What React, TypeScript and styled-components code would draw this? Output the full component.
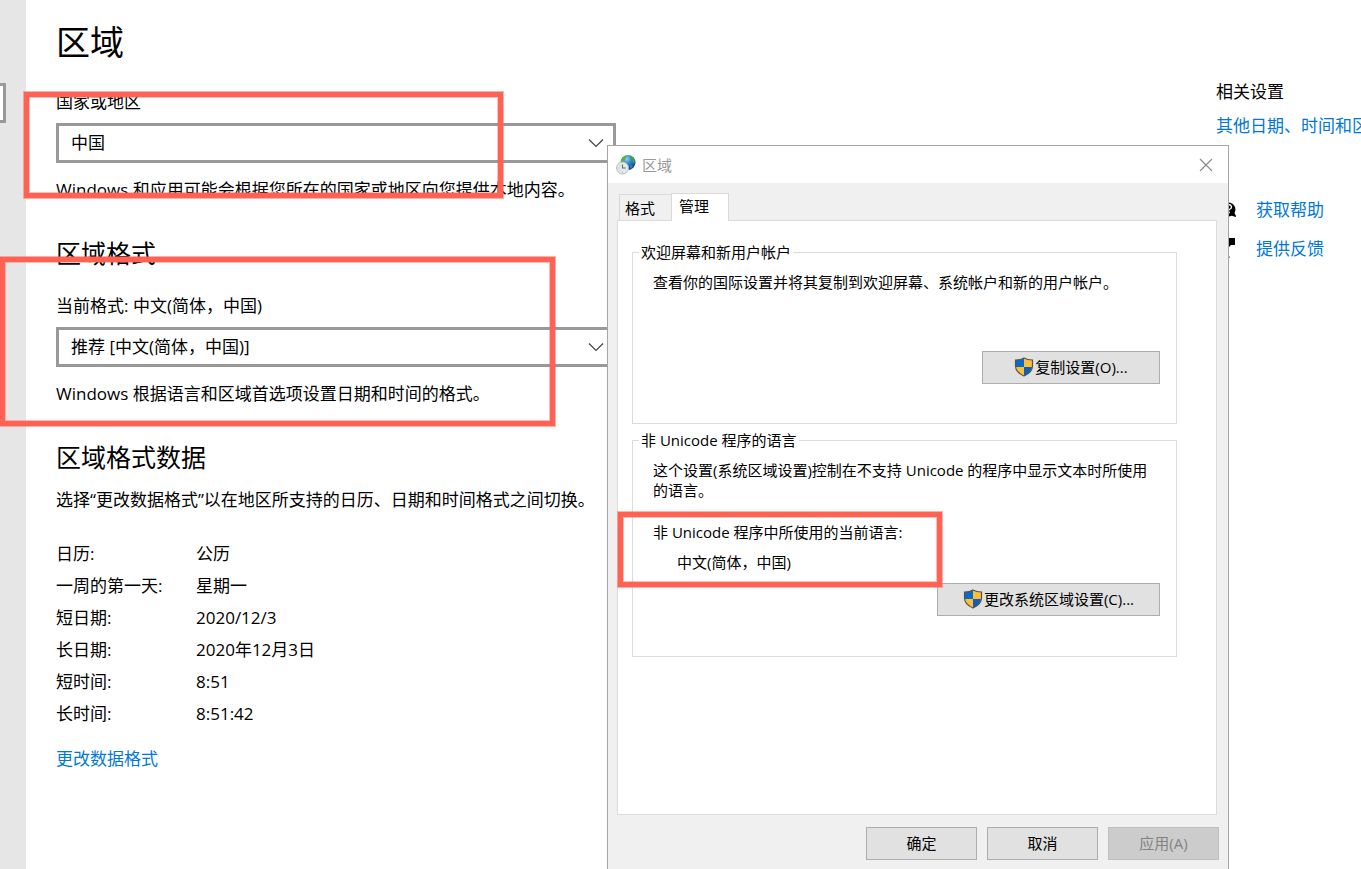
import React from "react";
import styled, { createGlobalStyle } from "styled-components";

const GlobalStyle = createGlobalStyle`
  *, *::before, *::after { box-sizing: border-box; }
  body {
    margin: 0;
    background: #fff;
    color: #000;
    font-family: "Open Sans", "Noto Sans CJK SC", sans-serif;
    font-size: 17px;
    line-height: 24px;
  }
  h1, h2, p, dl, dd, dt { margin: 0; font-weight: 400; }
`;

const Page = styled.div`
  position: relative;
  display: flex;
  height: 100vh;
  overflow: hidden;
`;

const Sidebar = styled.nav`
  flex: none;
  display: flex;
  justify-content: flex-end;
  align-items: flex-start;
  width: 26px;
  padding: 83px 20px 0 0;
  overflow: hidden;
  background: #e6e6e6;
`;

const SearchBox = styled.input`
  flex: none;
  width: 280px;
  height: 40px;
  border: 3px solid #999;
  background: #fff;
`;

const Main = styled.main`
  flex: 1;
  min-width: 0;
  padding: 18px 30px 0;
`;

const Title = styled.h1`
  font-size: 34px;
  line-height: 48px;
`;

const Section = styled.section<{ $gap: number }>`
  display: flex;
  flex-direction: column;
  align-items: flex-start;
  margin-top: ${(p) => p.$gap}px;
`;

const Heading = styled.h2`
  font-size: 25px;
  line-height: 36px;
`;

const Label = styled.label<{ $gap?: number }>`
  margin-top: ${(p) => p.$gap ?? 0}px;
`;

const SelectFrame = styled.div`
  position: relative;
  width: 560px;
  margin-top: 9px;
`;

const Select = styled.select`
  display: block;
  width: 100%;
  height: 40px;
  padding: 0 40px 0 12px;
  appearance: none;
  border: 3px solid #999;
  border-radius: 0;
  background: #fff;
  color: #000;
  font: inherit;
`;

const Chevron = styled.svg`
  position: absolute;
  right: 12px;
  top: 15px;
  pointer-events: none;
`;

const Description = styled.p<{ $gap: number }>`
  margin-top: ${(p) => p.$gap}px;
  white-space: nowrap;
`;

const FormatList = styled.dl`
  display: grid;
  grid-template-columns: 140px auto;
  grid-auto-rows: 32px;
  align-items: center;
  margin-top: 26px;
`;

const Link = styled.a`
  color: #0078d7;
  text-decoration: none;
  white-space: nowrap;
`;

const FormatLink = styled(Link)`
  margin-top: 17px;
`;

const Related = styled.aside`
  flex: none;
  display: flex;
  flex-direction: column;
  width: 145px;
  padding-top: 80px;
  overflow: hidden;
`;

const RelatedTitle = styled.h2`
  margin-bottom: 10px;
  font-size: 17px;
  line-height: 24px;
`;

const HelpLinks = styled.div`
  display: flex;
  flex-direction: column;
  gap: 15px;
  margin-top: 60px;
`;

const HelpRow = styled.div`
  display: flex;
  align-items: center;
  gap: 20px;
`;

const Dialog = styled.div`
  position: absolute;
  left: 607px;
  top: 145px;
  bottom: 0;
  display: flex;
  flex-direction: column;
  width: 622px;
  border: 1px solid #a5a5a5;
  border-bottom: 0;
  background: #f0f0f0;
  font-size: 15px;
  line-height: 20px;
`;

const TitleBar = styled.header`
  flex: none;
  display: flex;
  align-items: center;
  gap: 6px;
  height: 37px;
  padding: 0 15px 0 8px;
  background: #fff;
  color: #999;
`;

const CloseButton = styled.button`
  display: flex;
  margin-left: auto;
  padding: 0;
  border: 0;
  background: none;
`;

const Tabs = styled.div`
  flex: none;
  display: flex;
  align-items: flex-end;
  padding: 10px 11px 0;
`;

const Tab = styled.button<{ $active?: boolean }>`
  position: relative;
  z-index: ${(p) => (p.$active ? 1 : 0)};
  width: ${(p) => (p.$active ? 58 : 53)}px;
  height: ${(p) => (p.$active ? 28 : 26)}px;
  margin: 0 -1px ${(p) => (p.$active ? -1 : 0)}px 0;
  padding: 0 0 ${(p) => (p.$active ? 3 : 0)}px ${(p) => (p.$active ? 7 : 5)}px;
  border: 1px solid #d9d9d9;
  border-bottom: 0;
  background: ${(p) => (p.$active ? "#fff" : "#f0f0f0")};
  color: #000;
  font: inherit;
  text-align: left;
`;

const Panel = styled.div`
  flex: 1;
  margin: 0 11px 0 9px;
  padding: 21px 39px 0 14px;
  border: 1px solid #dcdcdc;
  background: #fff;
`;

const Group = styled.fieldset<{ $height: number }>`
  display: flex;
  flex-direction: column;
  align-items: flex-start;
  min-width: 0;
  height: ${(p) => p.$height}px;
  margin: 0 0 6px;
  padding: 10px 16px 0 20px;
  border: 1px solid #dcdcdc;
`;

const Legend = styled.legend`
  margin-left: -14px;
  padding: 0 2px;
`;

const GroupLabel = styled.p`
  margin-top: 22px;
`;

const GroupValue = styled.p`
  margin: 10px 0 0 24px;
`;

const PushButton = styled.button<{ $width: number; $gap?: number }>`
  flex: none;
  display: flex;
  align-items: center;
  justify-content: center;
  align-self: flex-end;
  width: ${(p) => p.$width}px;
  height: 33px;
  margin-top: ${(p) => p.$gap ?? 0}px;
  padding: 0 0 2px;
  border: 1px solid #adadad;
  background: #e1e1e1;
  color: #000;
  font: inherit;

  &:disabled {
    border-color: #bfbfbf;
    background: #ccc;
    color: #838383;
  }
`;

const Footer = styled.footer`
  flex: none;
  display: flex;
  justify-content: flex-end;
  gap: 10px;
  padding: 12px 9px 9px;
`;

const Highlight = styled.div<{ $x: number; $y: number; $w: number; $h: number }>`
  position: absolute;
  left: ${(p) => p.$x}px;
  top: ${(p) => p.$y}px;
  width: ${(p) => p.$w}px;
  height: ${(p) => p.$h}px;
  border: 5px solid #ff6153;
  box-shadow: 0 0 0 1px rgba(255, 97, 83, 0.5), inset 0 0 0 1px rgba(255, 97, 83, 0.4);
  pointer-events: none;
`;

const DropArrow = () => (
  <Chevron width="16" height="10" viewBox="0 0 16 10" fill="none" stroke="#444" strokeWidth="1.2">
    <path d="M1 1.5 8 8.5l7-7" />
  </Chevron>
);

const Shield = () => (
  <svg width="21" height="20" viewBox="0 0 21 20">
    <path d="M10 1C7.500 2.500 4.500 3 1.500 3V10H10z" fill="#0a6ac9" />
    <path d="M10 1c2.500 1.500 5.500 2 8 2V10h-8z" fill="#ffbe38" />
    <path d="M1.500 10H10v9C5.500 17 1.800 14 1.500 10z" fill="#ffbe38" />
    <path d="M10 10h8c-.3 4-3.500 7-8 9z" fill="#0a5fc0" />
    <path
      d="M10 1C7.500 2.500 4.500 3 1.500 3v6c0 4.800 3.500 7.800 8.500 10 5-2.200 8.500-5.200 8.500-10V3C15.500 3 12.500 2.500 10 1z"
      fill="none"
      stroke="#5a5448"
      strokeWidth="1.200"
    />
  </svg>
);

const RegionIcon = () => (
  <svg width="20" height="22" viewBox="0 0 20 22">
    <defs>
      <radialGradient id="globe" cx="0.400" cy="0.250" r="0.800">
        <stop offset="0" stopColor="#8fd4f5" />
        <stop offset="0.450" stopColor="#2a7fd8" />
        <stop offset="1" stopColor="#0b2a94" />
      </radialGradient>
    </defs>
    <circle cx="12" cy="8.500" r="7.500" fill="url(#globe)" />
    <path d="M5 7c.5-3 2.500-5 5-5.500l1.500 1L9 5l-.5 3L6 9.500z" fill="#55b53a" />
    <path d="M14.500 2c2 .8 3.800 2.500 4.500 4.500l-.8 3-1.700-1-.3-2.500-1.900-1z" fill="#3fa535" />
    <path d="M14 10.500l2.500.5-.5 3-1.500 1z" fill="#358e58" />
    <circle cx="6.500" cy="14" r="6" fill="#e4eaec" stroke="#b4bdc0" />
    <path d="M6.500 10.500V14h3.200" fill="none" stroke="#5c6a73" strokeWidth="1.100" />
    <path d="M6.500 17.500v1M2.300 14h1M3.600 11l.6.600M3.600 17l.6-.6" stroke="#8b979d" strokeWidth="0.800" />
  </svg>
);

const HelpIcon = () => (
  <svg width="20" height="20" viewBox="0 0 20 20">
    <path d="M12.500 2.500a7 7 0 0 1 6 10.500l2 4-4.800-1.200A7 7 0 1 1 12.500 2.500z" fill="#000" />
    <path d="M11 7a2.200 2.200 0 1 1 3 2c-.8.4-1 .7-1 1.500" fill="none" stroke="#fff" strokeWidth="1.300" />
    <circle cx="13" cy="12.500" r="0.900" fill="#fff" />
  </svg>
);

const FeedbackIcon = () => (
  <svg width="20" height="22" viewBox="0 0 20 22">
    <path d="M7 0h12v7h-4l-3 3V7H7z" fill="#000" />
    <circle cx="6" cy="11" r="3.500" fill="#000" />
    <path d="M0 20c0-4 2.500-6 6-6s7.500 2 7.500 6z" fill="#000" />
  </svg>
);

const formats = [
  ["日历:", "公历"],
  ["一周的第一天:", "星期一"],
  ["短日期:", "2020/12/3"],
  ["长日期:", "2020年12月3日"],
  ["短时间:", "8:51"],
  ["长时间:", "8:51:42"],
];

export default function App() {
  return (
    <>
      <GlobalStyle />
      <Page lang="zh-CN">
        <Sidebar>
          <SearchBox type="search" aria-label="查找设置" />
        </Sidebar>
        <Main>
          <Title>区域</Title>
          <Section $gap={24}>
            <Label htmlFor="country">国家或地区</Label>
            <SelectFrame>
              <Select id="country">
                <option>中国</option>
              </Select>
              <DropArrow />
            </SelectFrame>
            <Description $gap={15}>
              Windows 和应用可能会根据您所在的国家或地区向您提供本地内容。
            </Description>
          </Section>
          <Section $gap={33}>
            <Heading>区域格式</Heading>
            <Label htmlFor="format" $gap={23}>当前格式: 中文(简体，中国)</Label>
            <SelectFrame>
              <Select id="format">
                <option>推荐 [中文(简体，中国)]</option>
              </Select>
              <DropArrow />
            </SelectFrame>
            <Description $gap={15}>Windows 根据语言和区域首选项设置日期和时间的格式。</Description>
          </Section>
          <Section $gap={33}>
            <Heading>区域格式数据</Heading>
            <Description $gap={13}>
              选择“更改数据格式”以在地区所支持的日历、日期和时间格式之间切换。
            </Description>
            <FormatList>
              {formats.map(([name, value]) => (
                <React.Fragment key={name}>
                  <dt>{name}</dt>
                  <dd>{value}</dd>
                </React.Fragment>
              ))}
            </FormatList>
            <FormatLink href="#formats">更改数据格式</FormatLink>
          </Section>
        </Main>
        <Related>
          <RelatedTitle>相关设置</RelatedTitle>
          <Link href="#related">其他日期、时间和区域设置</Link>
          <HelpLinks>
            <HelpRow>
              <HelpIcon />
              <Link href="#help">获取帮助</Link>
            </HelpRow>
            <HelpRow>
              <FeedbackIcon />
              <Link href="#feedback">提供反馈</Link>
            </HelpRow>
          </HelpLinks>
        </Related>

        <Dialog role="dialog" aria-label="区域">
          <TitleBar>
            <RegionIcon />
            <span>区域</span>
            <CloseButton type="button" aria-label="关闭">
              <svg width="14" height="14" viewBox="0 0 14 14" stroke="#888" strokeWidth="1.100">
                <path d="M1 1l12 12M13 1L1 13" />
              </svg>
            </CloseButton>
          </TitleBar>
          <Tabs role="tablist">
            <Tab type="button" role="tab" aria-selected="false">格式</Tab>
            <Tab type="button" role="tab" aria-selected="true" $active>管理</Tab>
          </Tabs>
          <Panel role="tabpanel">
            <Group $height={182}>
              <Legend>欢迎屏幕和新用户帐户</Legend>
              <p>查看你的国际设置并将其复制到欢迎屏幕、系统帐户和新的用户帐户。</p>
              <PushButton type="button" $width={178} $gap={59}>
                <Shield />
                复制设置(O)...
              </PushButton>
            </Group>
            <Group $height={227}>
              <Legend>非 Unicode 程序的语言</Legend>
              <p>这个设置(系统区域设置)控制在不支持 Unicode 的程序中显示文本时所使用的语言。</p>
              <GroupLabel>非 Unicode 程序中所使用的当前语言:</GroupLabel>
              <GroupValue>中文(简体，中国)</GroupValue>
              <PushButton type="button" $width={223} $gap={11}>
                <Shield />
                更改系统区域设置(C)...
              </PushButton>
            </Group>
          </Panel>
          <Footer>
            <PushButton type="button" $width={111}>确定</PushButton>
            <PushButton type="button" $width={111}>取消</PushButton>
            <PushButton type="button" $width={111} disabled>应用(A)</PushButton>
          </Footer>
        </Dialog>

        <Highlight $x={24} $y={92} $w={479} $h={106} />
        <Highlight $x={0} $y={257} $w={555} $h={169} />
        <Highlight $x={618} $y={512} $w={324} $h={75} />
      </Page>
    </>
  );
}
